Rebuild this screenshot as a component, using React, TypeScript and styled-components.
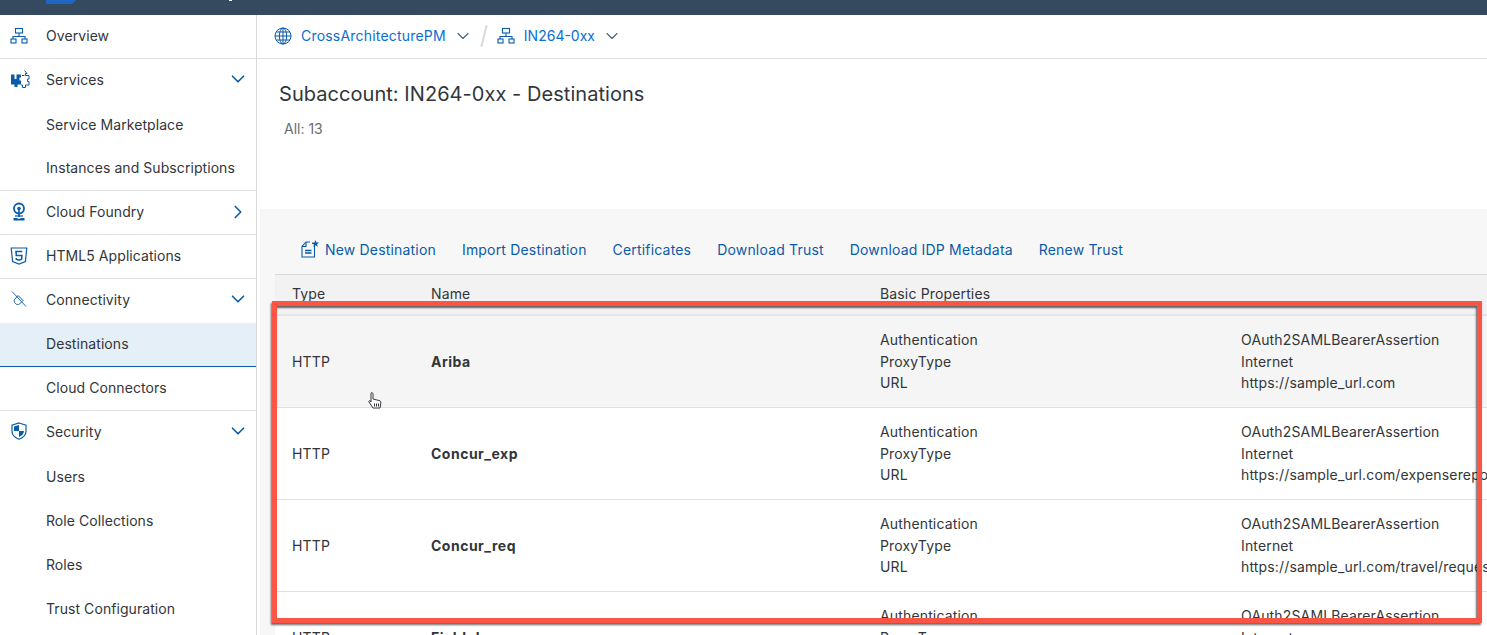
import React from 'react';
import styled, { createGlobalStyle } from 'styled-components';
import { ChevronDown, ChevronRight } from 'lucide-react';

const GlobalStyle = createGlobalStyle`
  html, body {
    margin: 0;
    height: 100%;
    overflow: hidden;
    background: #fff;
    font-family: Inter, 'Noto Sans', 'Liberation Sans', sans-serif;
    font-size: 14px;
    color: #32363a;
  }
`;

const Page = styled.div`
  position: relative;
  width: 1487px;
  height: 635px;
  overflow: hidden;
`;

const TopBar = styled.header`
  height: 15px;
  background: #354a5f;
  padding-left: 46px;
  display: flex;
  align-items: flex-start;
`;

const LogoTip = styled.div`
  width: 30px;
  height: 4px;
  background: #1f66c4;
  clip-path: polygon(0 0, 100% 0, 88% 100%, 0 100%);
`;

const TitleDescender = styled.div`
  width: 3px;
  height: 1px;
  margin-left: 153px;
  background: #fff;
`;

const Body = styled.div`
  display: flex;
  height: 620px;
`;

const Sidebar = styled.nav`
  width: 256px;
  flex: none;
  border-right: 1px solid #d9d9d9;
  letter-spacing: 0.07px;
`;

const NavRow = styled.div<{ $divider?: boolean; $active?: boolean; $group?: boolean }>`
  height: 44px;
  box-sizing: border-box;
  display: flex;
  align-items: center;
  padding: 0 7px ${(p) => (p.$group ? '4px' : '2px')} 10px;
  background: ${(p) => (p.$active ? '#e5eff8' : '#fff')};
  border-bottom: ${(p) =>
    p.$active ? '1px solid #0a5ba8' : p.$divider ? '1px solid #e0e0e0' : '0'};
`;

const NavIcon = styled.span`
  width: 36px;
  flex: none;
  display: flex;
  color: #0a5ba8;
`;

const NavLabel = styled.span`
  flex: 1;
  white-space: nowrap;
`;

const Caret = styled.span`
  display: flex;
  color: #0a5ba8;
`;

const Main = styled.main`
  flex: 1;
  min-width: 0;
`;

const Crumbs = styled.div`
  height: 44px;
  box-sizing: border-box;
  border-bottom: 1px solid #e0e0e0;
  display: flex;
  align-items: center;
  padding: 0 0 2px 17px;
  color: #0a6ed1;
`;

const CrumbIcon = styled.span`
  display: flex;
  margin-right: 9px;
  color: #0a5ba8;
`;

const CrumbLabel = styled.span<{ $wide?: boolean }>`
  letter-spacing: ${(p) => (p.$wide ? '0.2px' : '0')};
`;

const CrumbCaret = styled.span`
  display: flex;
  margin-left: 7px;
  color: #42607d;
`;

const CrumbSlash = styled.span`
  width: 2px;
  height: 22px;
  background: #d9d9d9;
  transform: rotate(14deg);
  margin: 0 12px 0 10px;
`;

const Heading = styled.div`
  height: 150px;
  box-sizing: border-box;
  padding: 21px 0 0 22px;
`;

const Title = styled.h1`
  margin: 0;
  font-size: 20px;
  font-weight: 400;
  line-height: 28px;
  letter-spacing: 0.05px;
`;

const Count = styled.div`
  margin: 11px 0 0 5px;
  color: #6a6d70;
  line-height: 20px;
`;

const Content = styled.section`
  margin-left: 3px;
  background: #f7f7f7;
  padding-left: 15px;
  height: 426px;
  overflow: hidden;
`;

const Toolbar = styled.div`
  height: 65px;
  box-sizing: border-box;
  display: flex;
  align-items: center;
  padding: 15px 0 0 25px;
  gap: 26px;
  color: #0a5ba8;
  letter-spacing: 0.18px;
`;

const ToolAction = styled.span`
  display: flex;
  align-items: center;
  gap: 5px;
  white-space: nowrap;
`;

const Columns = styled.div`
  display: grid;
  grid-template-columns: 139px 449px 361px 1fr;
  padding-left: 17px;
  letter-spacing: 0.15px;
`;

const HeaderRow = styled(Columns)`
  height: 42px;
  box-sizing: border-box;
  background: #f2f2f2;
  border-top: 1px solid #d9d9d9;
  border-bottom: 2px solid #e5e5e5;
  padding-top: 9px;
  line-height: 20px;
`;

const DataRow = styled(Columns)<{ $hover?: boolean }>`
  height: 92px;
  box-sizing: border-box;
  align-items: center;
  background: ${(p) => (p.$hover ? '#f5f5f5' : '#fff')};
  border-bottom: 1px solid #e0e0e0;
  line-height: 21.5px;
  white-space: nowrap;
`;

const Name = styled.span`
  font-weight: 700;
  letter-spacing: 0.5px;
`;

const Highlight = styled.div`
  position: absolute;
  left: 272px;
  top: 301px;
  width: 1210px;
  height: 322px;
  box-sizing: border-box;
  border: 5px solid #fb5546;
  box-shadow: -1px 2px 2px rgba(0, 0, 0, 0.6), inset -1px 2px 2px rgba(0, 0, 0, 0.6);
  pointer-events: none;
`;

const Pointer = styled.svg`
  position: absolute;
  left: 367px;
  top: 391px;
`;

const Sitemap = () => (
  <svg width="18" height="18" viewBox="0 0 18 18" fill="none" stroke="currentColor" strokeWidth="1.1">
    <rect x="5.5" y="1.5" width="7" height="4.5" />
    <path d="M9 6v3.500M3 12V9.500h12V12" />
    <rect x="1" y="12" width="5" height="4" />
    <rect x="12" y="12" width="5" height="4" />
  </svg>
);

const PuzzleIcon = () => (
  <svg width="20" height="20" viewBox="0 0 20 20" fill="none">
    <path d="M1 5.500h3.500V7h2V5.500H11V8.500H9.500v3H11v4H7.500V18h-3v-2.500H1z" fill="currentColor" />
    <rect x="4.500" y="7" width="2" height="3" fill="#fff" />
    <path
      d="M14.500 1.500l2.500 3h-1.500v2H19v3.500h-1.500v2.500H19V16h-3.500v2.500h-3V16H11M12 6.500h2.500"
      stroke="currentColor"
      strokeWidth="1"
    />
  </svg>
);

const FoundryIcon = () => (
  <svg width="18" height="20" viewBox="0 0 18 20" fill="none" stroke="currentColor">
    <circle cx="9" cy="6.500" r="5" strokeWidth="1.800" />
    <circle cx="9" cy="6.500" r="1.800" fill="currentColor" stroke="none" />
    <path d="M9 8v7" strokeWidth="1.600" />
    <path d="M5 14h8" strokeWidth="1.200" />
    <path d="M3.500 18.500v-2.500h3.500l2 1 2-1h3.500v2.500z" fill="currentColor" stroke="none" />
  </svg>
);

const Html5Icon = () => (
  <svg width="18" height="18" viewBox="0 0 18 18" fill="none" stroke="currentColor">
    <path d="M1.200 1h15.600l-1.400 13.500L9 17l-6.400-2.500z" strokeWidth="1.200" />
    <path d="M12.300 4.500H6l.3 4h5.600l-.3 3.800-2.600 1-2.700-1-.1-1.300" strokeWidth="1.500" />
  </svg>
);

const ConnectivityIcon = () => (
  <svg width="18" height="18" viewBox="0 0 18 18" fill="none" stroke="currentColor">
    <path d="M2 1.500l14 15" strokeWidth="0.9" />
    <path d="M4.500 9.500L8 5.500l5 5-3.500 3.500c-1 .8-2.800.8-4-.4-1.200-1.200-1.700-3-1-4.100z" strokeWidth="1" />
  </svg>
);

const ShieldIcon = () => (
  <svg width="18" height="18" viewBox="0 0 18 18" fill="none">
    <path d="M9 1l7 2.200v6c0 4-3.400 6.600-7 8-3.600-1.400-7-4-7-8v-6z" stroke="currentColor" strokeWidth="1.200" />
    <path d="M9 3v6H4V4.500zM9 9h5c0 3-2.400 4.800-5 6z" fill="currentColor" />
  </svg>
);

const GlobeIcon = () => (
  <svg width="18" height="18" viewBox="0 0 18 18" fill="none" stroke="currentColor" strokeWidth="1">
    <circle cx="9" cy="9" r="8" />
    <ellipse cx="9" cy="9" rx="3.600" ry="8" />
    <path d="M9 1v16M1 9h16M2.200 5h13.600M2.200 13h13.600" />
  </svg>
);

const NewDocIcon = () => (
  <svg width="20" height="20" viewBox="0 0 20 20" fill="none" stroke="currentColor" strokeWidth="1.100">
    <path d="M12 4.500h2.500V18H2V7.500L6 3h4" />
    <path d="M6 3v4.500H2" />
    <path d="M5 11.500h6.500M5 14h6.500" strokeWidth="1.400" />
    <path
      d="M15.500 1l1 2.400 2.500.2-1.900 1.600.6 2.500-2.200-1.400-2.200 1.400.6-2.500L12 3.600l2.500-.2z"
      fill="currentColor"
      stroke="none"
    />
  </svg>
);

const down = <ChevronDown size={22} strokeWidth={1.8} />;

const navItems: {
  label: string;
  icon?: React.ReactNode;
  caret?: React.ReactNode;
  divider?: boolean;
  active?: boolean;
  group?: boolean;
}[] = [
  { label: 'Overview', icon: <Sitemap />, divider: true },
  { label: 'Services', icon: <PuzzleIcon />, caret: down, group: true },
  { label: 'Service Marketplace' },
  { label: 'Instances and Subscriptions', divider: true },
  { label: 'Cloud Foundry', icon: <FoundryIcon />, caret: <ChevronRight size={22} strokeWidth={1.8} />, divider: true },
  { label: 'HTML5 Applications', icon: <Html5Icon />, divider: true },
  { label: 'Connectivity', icon: <ConnectivityIcon />, caret: down, group: true },
  { label: 'Destinations', active: true },
  { label: 'Cloud Connectors', divider: true },
  { label: 'Security', icon: <ShieldIcon />, caret: down, group: true },
  { label: 'Users' },
  { label: 'Role Collections' },
  { label: 'Roles' },
  { label: 'Trust Configuration' },
];

const actions = ['Import Destination', 'Certificates', 'Download Trust', 'Download IDP Metadata', 'Renew Trust'];

const destinations = [
  { name: 'Ariba', url: 'https://sample_url.com', hover: true },
  { name: 'Concur_exp', url: 'https://sample_url.com/expenserepo' },
  { name: 'Concur_req', url: 'https://sample_url.com/travel/requests' },
  { name: 'Fieldglass', url: 'https://sample_url.com/fieldglass' },
];

const App = () => (
  <Page>
    <GlobalStyle />
    <TopBar>
      <LogoTip />
      <TitleDescender />
    </TopBar>
    <Body>
      <Sidebar>
        {navItems.map((item) => (
          <NavRow key={item.label} $divider={item.divider} $active={item.active} $group={item.group}>
            <NavIcon>{item.icon}</NavIcon>
            <NavLabel>{item.label}</NavLabel>
            {item.caret && <Caret>{item.caret}</Caret>}
          </NavRow>
        ))}
      </Sidebar>
      <Main>
        <Crumbs>
          <CrumbIcon>
            <GlobeIcon />
          </CrumbIcon>
          <CrumbLabel $wide>CrossArchitecturePM</CrumbLabel>
          <CrumbCaret>
            <ChevronDown size={20} strokeWidth={1.3} />
          </CrumbCaret>
          <CrumbSlash />
          <CrumbIcon>
            <Sitemap />
          </CrumbIcon>
          <CrumbLabel>IN264-0xx</CrumbLabel>
          <CrumbCaret>
            <ChevronDown size={20} strokeWidth={1.3} />
          </CrumbCaret>
        </Crumbs>
        <Heading>
          <Title>Subaccount: IN264-0xx - Destinations</Title>
          <Count>All: 13</Count>
        </Heading>
        <Content>
          <Toolbar>
            <ToolAction>
              <NewDocIcon />
              New Destination
            </ToolAction>
            {actions.map((a) => (
              <ToolAction key={a}>{a}</ToolAction>
            ))}
          </Toolbar>
          <HeaderRow>
            <span>Type</span>
            <span>Name</span>
            <span>Basic Properties</span>
            <span />
          </HeaderRow>
          {destinations.map((d) => (
            <DataRow key={d.name} $hover={d.hover}>
              <span>HTTP</span>
              <Name>{d.name}</Name>
              <div>
                Authentication
                <br />
                ProxyType
                <br />
                URL
              </div>
              <div>
                OAuth2SAMLBearerAssertion
                <br />
                Internet
                <br />
                {d.url}
              </div>
            </DataRow>
          ))}
        </Content>
      </Main>
    </Body>
    <Highlight />
    <Pointer width="16" height="20" viewBox="0 0 16 20" fill="#fff" stroke="#32363a" strokeWidth="1">
      <path d="M4 2c1-1 2 0 2 1v5l6 1.500c1.500.5 2 1 1.800 2.500L13 17H6L2 11c-.5-1 .5-2 1.500-1L4 11z" />
      <path d="M7.500 12.500V15.500M9.500 12.500V15.500M11.500 12.500V15.500" />
    </Pointer>
  </Page>
);

export default App;
